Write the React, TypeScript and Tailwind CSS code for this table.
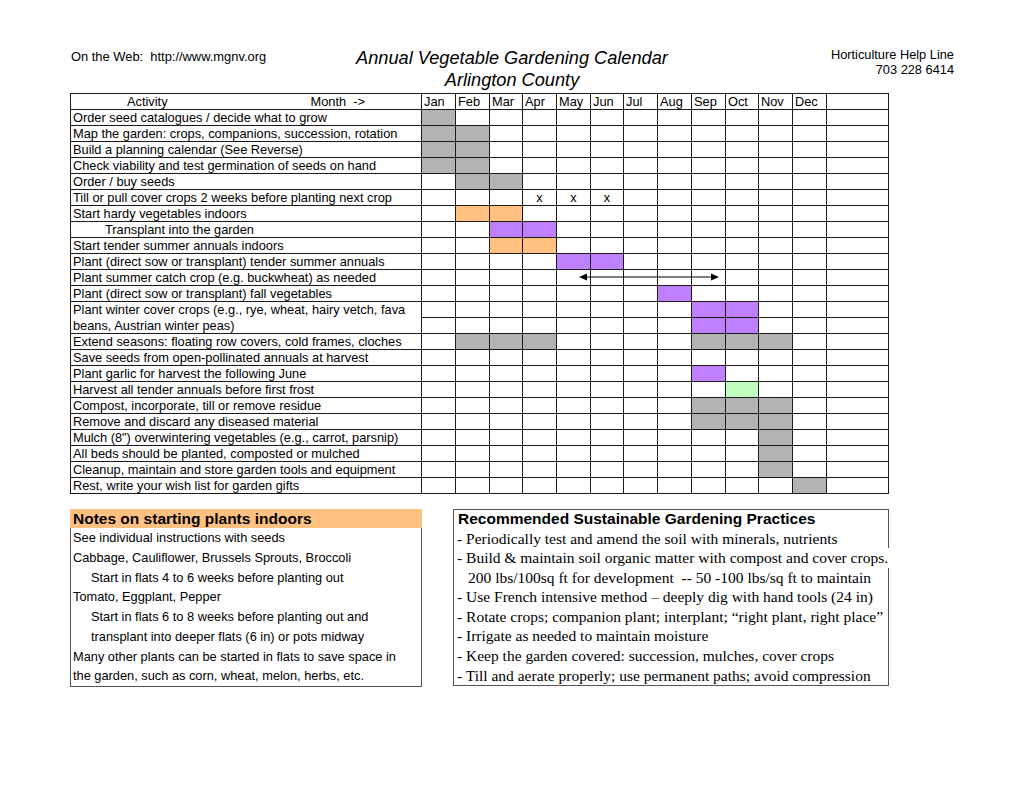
const MONTHS = ["Jan", "Feb", "Mar", "Apr", "May", "Jun", "Jul", "Aug", "Sep", "Oct", "Nov", "Dec"];

// One char per month: g = gray, o = orange, p = purple, l = light green, x = mark, . = empty
type Row = { label: string; cells: string; indent?: boolean; arrow?: boolean; double?: [string, string] };

const ROWS: Row[] = [
	{ label: "Order seed catalogues / decide what to grow", cells: "g..........." },
	{ label: "Map the garden: crops, companions, succession, rotation", cells: "gg.........." },
	{ label: "Build a planning calendar (See Reverse)", cells: "gg.........." },
	{ label: "Check viability and test germination of seeds on hand", cells: "gg.........." },
	{ label: "Order / buy seeds", cells: ".gg........." },
	{ label: "Till or pull cover crops 2 weeks before planting next crop", cells: "...xxx......" },
	{ label: "Start hardy vegetables indoors", cells: ".oo........." },
	{ label: "Transplant into the garden", cells: "..pp........", indent: true },
	{ label: "Start tender summer annuals indoors", cells: "..oo........" },
	{ label: "Plant (direct sow or transplant) tender summer annuals", cells: "....pp......" },
	{ label: "Plant summer catch crop (e.g. buckwheat) as needed", cells: "............", arrow: true },
	{ label: "Plant (direct sow or transplant) fall vegetables", cells: ".......p...." },
	{
		label: "",
		cells: "........pp..",
		double: ["Plant winter cover crops (e.g., rye, wheat, hairy vetch, fava", "beans, Austrian winter peas)"],
	},
	{ label: "Extend seasons: floating row covers, cold frames, cloches", cells: ".ggg....ggg." },
	{ label: "Save seeds from open-pollinated annuals at harvest", cells: "............" },
	{ label: "Plant garlic for harvest the following June", cells: "........p..." },
	{ label: "Harvest all tender annuals before first frost", cells: ".........l.." },
	{ label: "Compost, incorporate, till or remove residue", cells: "........ggg." },
	{ label: "Remove and discard any diseased material", cells: "........ggg." },
	{ label: 'Mulch (8") overwintering vegetables (e.g., carrot, parsnip)', cells: "..........g." },
	{ label: "All beds should be planted, composted or mulched", cells: "..........g." },
	{ label: "Cleanup, maintain and store garden tools and equipment", cells: "..........g." },
	{ label: "Rest, write your wish list for garden gifts", cells: "...........g" },
];

const FILL: Record<string, string> = {
	g: "bg-[#b3b3b3]",
	o: "bg-[#ffc080]",
	p: "bg-[#bf80ff]",
	l: "bg-[#c0ffc0]",
	x: "bg-white",
	".": "bg-white",
};

const NOTES = [
	{ text: "See individual instructions with seeds" },
	{ text: "Cabbage, Cauliflower, Brussels Sprouts, Broccoli" },
	{ text: "Start in flats 4 to 6 weeks before planting out", indent: true },
	{ text: "Tomato, Eggplant, Pepper" },
	{ text: "Start in flats 6 to 8 weeks before planting out and", indent: true },
	{ text: "transplant into deeper flats (6 in) or pots midway", indent: true },
	{ text: "Many other plants can be started in flats to save space in" },
	{ text: "the garden, such as corn, wheat, melon, herbs, etc." },
];

const PRACTICES = [
	"- Periodically test and amend the soil with minerals, nutrients",
	"- Build & maintain soil organic matter with compost and cover crops.",
	"200 lbs/100sq ft for development  -- 50 -100 lbs/sq ft to maintain",
	"- Use French intensive method \u2013 deeply dig with hand tools (24 in)",
	"- Rotate crops; companion plant; interplant; \u201cright plant, right place\u201d",
	"- Irrigate as needed to maintain moisture",
	"- Keep the garden covered: succession, mulches, cover crops",
	"- Till and aerate properly; use permanent paths; avoid compression",
];

function Arrow() {
	return (
		<svg className="absolute left-[22px] top-[2px] overflow-visible" width="140" height="10" viewBox="0 0 140 10">
			<line x1="4" y1="5" x2="136" y2="5" stroke="#000" strokeWidth="1" />
			<polygon points="0,5 8,1.5 8,8.5" fill="#000" />
			<polygon points="140,5 132,1.5 132,8.5" fill="#000" />
		</svg>
	);
}

function MonthCells({ cells, arrow }: { cells: string; arrow?: boolean }) {
	return (
		<>
			{cells.split("").map((c, i) => (
				<div key={i} className={`${FILL[c]} ${arrow && i === 4 ? "relative" : ""} text-center`}>
					{c === "x" ? "x" : ""}
					{arrow && i === 4 && <Arrow />}
				</div>
			))}
			<div className="bg-white" />
		</>
	);
}

function Calendar() {
	return (
		<div className="ml-[70px] mt-[2px] grid w-max grid-cols-[350px_33px_33px_32px_33px_33px_32px_33px_33px_33px_32px_33px_33px_61px] auto-rows-[15px] gap-px border border-[#1a1a1a] bg-[#1a1a1a] text-[12.8px] leading-[15px]">
			<div className="flex bg-white">
				<span className="pl-[56px]">Activity</span>
				<span className="ml-auto whitespace-pre pr-[56px]">Month  -&gt;</span>
			</div>
			{MONTHS.map((m) => (
				<div key={m} className="bg-white pl-[2px]">
					{m}
				</div>
			))}
			<div className="bg-white" />

			{ROWS.map((row, r) =>
				row.double ? (
					<div key={r} className="contents">
						<div className="row-span-2 bg-white pl-[2px] leading-[15.5px]">
							<div>{row.double[0]}</div>
							<div>{row.double[1]}</div>
						</div>
						<MonthCells cells={row.cells} />
						<MonthCells cells={row.cells} />
					</div>
				) : (
					<div key={r} className="contents">
						<div className={`bg-white whitespace-nowrap ${row.indent ? "pl-[34px]" : "pl-[2px]"}`}>{row.label}</div>
						<MonthCells cells={row.cells} arrow={row.arrow} />
					</div>
				),
			)}
		</div>
	);
}

export default function App() {
	return (
		<div className="relative h-[791px] w-[1024px] overflow-hidden bg-white font-['Liberation_Sans',Arial,sans-serif] text-black">
			<div className="grid grid-cols-[1fr_auto_1fr] px-[70px] pt-[47px]">
				<div className="mt-[2px] whitespace-pre pl-px text-[12.9px] leading-[15px]">On the Web:  http://www.mgnv.org</div>
				<div className="text-center text-[18.2px] italic leading-[22px]">
					<div>Annual Vegetable Gardening Calendar</div>
					<div>Arlington County</div>
				</div>
				<div className="text-right text-[12.8px] leading-[15px]">
					<div>Horticulture Help Line</div>
					<div>703 228 6414</div>
				</div>
			</div>

			<Calendar />

			<div className="ml-[70px] mt-[15px] flex items-start">
				<div className="w-[352px]">
					<div className="h-[19px] bg-[#ffc080] pl-[3px] text-[15.5px] font-bold leading-[20px]">
						Notes on starting plants indoors
					</div>
					<div className="border-x border-b border-[#555] text-[12.8px] leading-[19.75px]">
						{NOTES.map((n, i) => (
							<div key={i} className={n.indent ? "pl-[20px]" : "pl-[2px]"}>
								{n.text}
							</div>
						))}
					</div>
				</div>

				<div className="ml-[31px] w-[436px] border border-[#555]">
					<div className="pl-[4px] text-[15.5px] font-bold leading-[18.5px]">Recommended Sustainable Gardening Practices</div>
					<div className="font-['Liberation_Serif','Times_New_Roman',serif] text-[15.5px] leading-[19.6px]">
						{PRACTICES.map((p, i) =>
							i === 1 ? (
								<div key={i} className="relative w-max whitespace-pre bg-white pl-[3px] pr-[3px]">
									{p}
								</div>
							) : (
								<div key={i} className={`whitespace-pre ${i === 2 ? "pl-[14px]" : "pl-[3px]"}`}>
									{p}
								</div>
							),
						)}
					</div>
				</div>
			</div>
		</div>
	);
}
